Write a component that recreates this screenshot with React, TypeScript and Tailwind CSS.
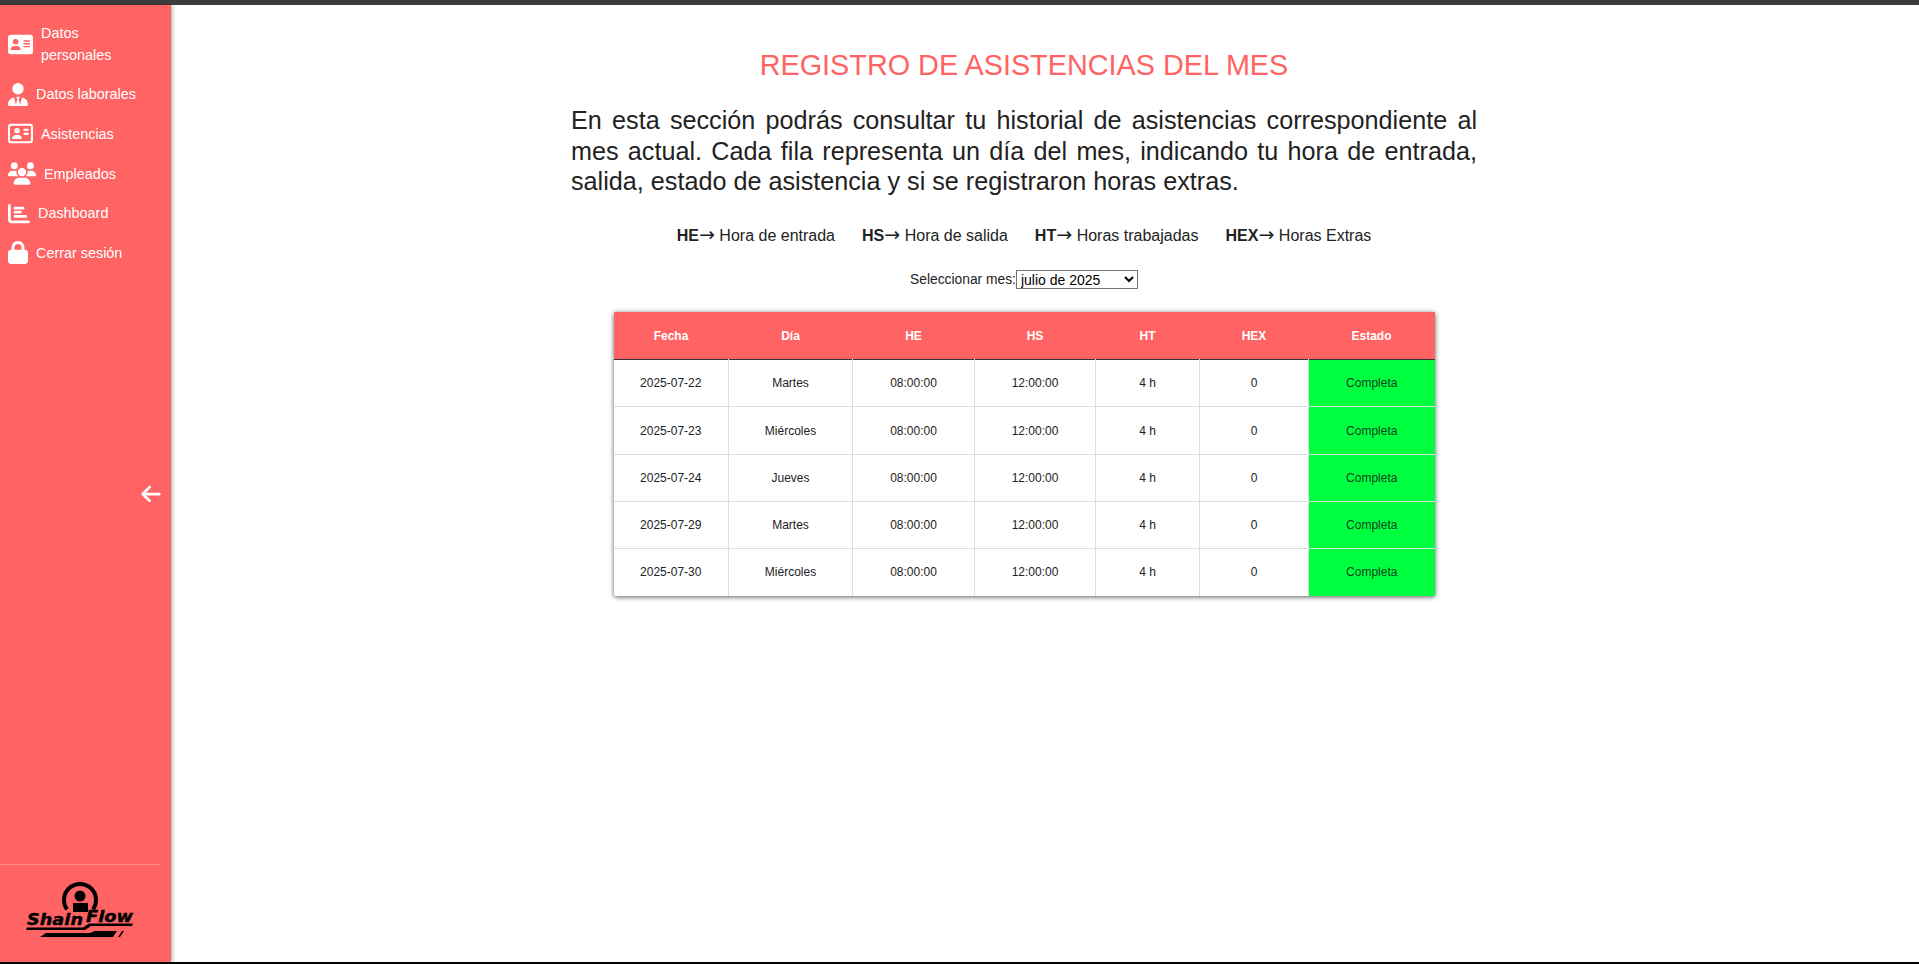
import React from "react";
import {
  FaAddressCard,
  FaArrowLeft,
  FaChartBar,
  FaLock,
  FaRegAddressCard,
  FaUsers,
  FaUserTie,
} from "react-icons/fa6";

const menu = [
  { label: "Datos personales", icon: FaAddressCard, size: "w-[25px]", wrap: true },
  { label: "Datos laborales", icon: FaUserTie, size: "w-[20px]" },
  { label: "Asistencias", icon: FaRegAddressCard, size: "w-[25px]" },
  { label: "Empleados", icon: FaUsers, size: "w-[28px]" },
  { label: "Dashboard", icon: FaChartBar, size: "w-[22px]" },
  { label: "Cerrar sesión", icon: FaLock, size: "w-[20px]" },
];

const legend = [
  { key: "HE", text: "Hora de entrada" },
  { key: "HS", text: "Hora de salida" },
  { key: "HT", text: "Horas trabajadas" },
  { key: "HEX", text: "Horas Extras" },
];

const rows = [
  { fecha: "2025-07-22", dia: "Martes" },
  { fecha: "2025-07-23", dia: "Miércoles" },
  { fecha: "2025-07-24", dia: "Jueves" },
  { fecha: "2025-07-29", dia: "Martes" },
  { fecha: "2025-07-30", dia: "Miércoles" },
];

const Logo = () => (
  <svg width="116" height="64" viewBox="0 0 116 64" className="block">
    <path d="M41 29.3 A16 16 0 1 1 67 29.3" fill="none" stroke="#000" strokeWidth="4" />
    <circle cx="54" cy="16" r="5.5" fill="#000" />
    <path d="M47 23 H62 V32 H47 Z" fill="#000" />
    <text
      x="1"
      y="45"
      fontFamily="'DejaVu Sans', sans-serif"
      fontSize="16"
      fontWeight="700"
      fontStyle="italic"
      fill="#000"
      stroke="#000"
      strokeWidth="0.4"
      textLength="56"
      lengthAdjust="spacingAndGlyphs"
    >
      Shain
    </text>
    <text
      x="60"
      y="42"
      fontFamily="'DejaVu Sans', sans-serif"
      fontSize="16"
      fontWeight="700"
      fontStyle="italic"
      fill="#000"
      stroke="#000"
      strokeWidth="0.4"
      textLength="47"
      lengthAdjust="spacingAndGlyphs"
    >
      Flow
    </text>
    <path d="M1 47.5 H57 L63 43.5 H107 L106 46 H65 L59 50 H0 Z" fill="#000" />
    <path d="M14 57 L20 53 H64 L69 51 H91 L87 57 Z" fill="#000" />
    <path d="M92 57 L96 51 H98 L94 57 Z" fill="#000" />
  </svg>
);

const Sidebar = () => (
  <aside className="relative flex w-[171px] shrink-0 flex-col justify-between bg-[#ff6363] shadow-[2px_0_3px_rgba(0,0,0,0.25)]">
    <nav className="flex flex-col gap-[16.7px] pt-[17px] pl-2">
      {menu.map((item) => (
        <a key={item.label} className="flex items-center gap-2 text-[14.4px] leading-[22px] text-white">
          <item.icon className={`h-[23px] shrink-0 ${item.size}`} />
          <span className={item.wrap ? "w-[80px]" : ""}>{item.label}</span>
        </a>
      ))}
    </nav>
    <FaArrowLeft className="absolute top-[478px] left-[141px] h-[22px] w-[20px] text-white" />
    <div className="mr-[10px] flex h-[98px] justify-start border-t border-[#ff8a8a] pt-[15px] pl-[26px]">
      <Logo />
    </div>
  </aside>
);

const App = () => {
  return (
    <div className="flex h-[964px] flex-col overflow-hidden bg-white font-['Liberation_Sans',sans-serif] text-[#222]">
      <div className="h-[5px] shrink-0 bg-[#3c3c3c]" />
      <div className="flex min-h-0 flex-1">
        <Sidebar />
        <main className="flex flex-1 flex-col items-center pt-[44px] pr-[42px]">
          <h1 className="text-[28.8px] leading-[33px] font-normal text-[#ff6363]">
            REGISTRO DE ASISTENCIAS DEL MES
          </h1>
          <p className="mt-[23px] w-[906px] text-[25.2px] leading-[30.6px]">
            <span className="block [text-align-last:justify]">
              En esta sección podrás consultar tu historial de asistencias correspondiente al
            </span>
            <span className="block [text-align-last:justify]">
              mes actual. Cada fila representa un día del mes, indicando tu hora de entrada,
            </span>
            <span className="block">salida, estado de asistencia y si se registraron horas extras.</span>
          </p>
          <div className="mt-[28px] flex gap-[27px] text-[16px] leading-[22px]">
            {legend.map((item) => (
              <span key={item.key}>
                <b>{item.key}</b>
                <span className="inline-block w-[16px] font-['DejaVu_Sans',sans-serif] text-[19px] leading-none">→</span>{" "}
                {item.text}
              </span>
            ))}
          </div>
          <div className="mt-[23px] flex items-center text-[14px] leading-[19px]">
            <label className="text-[13.8px]">Seleccionar mes:</label>
            <select className="h-[19px] w-[122px] border border-[#767676] bg-white pl-0 text-[14px] text-black">
              <option>julio de 2025</option>
            </select>
          </div>
          <table className="mt-[23px] w-[821px] table-fixed border-collapse rounded-[2px] text-center text-[12px] shadow-[0_1px_5px_rgba(0,0,0,0.65)]">
            <colgroup>
              <col className="w-[115px]" />
              <col className="w-[124px]" />
              <col className="w-[122px]" />
              <col className="w-[121px]" />
              <col className="w-[104px]" />
              <col className="w-[109px]" />
              <col className="w-[126px]" />
            </colgroup>
            <thead>
              <tr className="h-[48px] border-b border-[#333] bg-[#ff6363] text-white">
                {["Fecha", "Día", "HE", "HS", "HT", "HEX", "Estado"].map((col) => (
                  <th key={col} className="font-bold">
                    {col}
                  </th>
                ))}
              </tr>
            </thead>
            <tbody>
              {rows.map((row) => (
                <tr key={row.fecha} className="h-[47.2px] border-b border-[#ddd] last:border-b-0">
                  <td className="border-r border-[#ddd]">{row.fecha}</td>
                  <td className="border-r border-[#ddd]">{row.dia}</td>
                  <td className="border-r border-[#ddd]">08:00:00</td>
                  <td className="border-r border-[#ddd]">12:00:00</td>
                  <td className="border-r border-[#ddd]">4 h</td>
                  <td className="border-r border-[#ddd]">0</td>
                  <td className="bg-[#00ff3f] text-[#0f3f22]">Completa</td>
                </tr>
              ))}
            </tbody>
          </table>
        </main>
      </div>
      <div className="h-[2px] shrink-0 bg-black" />
    </div>
  );
};

export default App;
